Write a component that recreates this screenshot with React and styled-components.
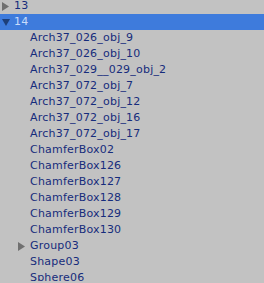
import React from 'react';
import styled, { createGlobalStyle } from 'styled-components';

const GlobalStyle = createGlobalStyle`
    html, body {
        margin: 0;
        padding: 0;
        background: #c2c2c2;
        overflow: hidden;
    }
`;

const Tree = styled.div`
    width: 264px;
    height: 283px;
    overflow: hidden;
    background: #c2c2c2;
    font-family: "DejaVu Sans", Verdana, sans-serif;
    font-size: 11px;
    letter-spacing: 0.2px;
    margin-top: -2px;
`;

const Row = styled.div`
    display: flex;
    align-items: center;
    height: 16px;
    padding-left: ${props => props.depth * 16 + 2}px;
    background: ${props => props.selected ? '#3e7bdc' : 'transparent'};
    color: ${props => props.selected ? '#c9dcfb' : '#162c7c'};
    white-space: nowrap;
`;

const Arrow = styled.span`
    width: 12px;
    height: 16px;
    display: flex;
    align-items: center;
    flex-shrink: 0;
`;

const Label = styled.span`
    line-height: 16px;
`;

const ArrowIcon = ({open, selected}) => (
    <svg width="8" height="9" viewBox="0 0 8 9">
        {open
            ? <polygon points="0,1 8,1 4,8" fill={selected ? '#1d3f7a' : '#707070'} />
            : <polygon points="0,0 7,4.5 0,9" fill="#707070" />}
    </svg>
);

const items = [
    {name: '13', depth: 0, arrow: 'closed'},
    {name: '14', depth: 0, arrow: 'open', selected: true},
    {name: 'Arch37_026_obj_9', depth: 1},
    {name: 'Arch37_026_obj_10', depth: 1},
    {name: 'Arch37_029__029_obj_2', depth: 1},
    {name: 'Arch37_072_obj_7', depth: 1},
    {name: 'Arch37_072_obj_12', depth: 1},
    {name: 'Arch37_072_obj_16', depth: 1},
    {name: 'Arch37_072_obj_17', depth: 1},
    {name: 'ChamferBox02', depth: 1},
    {name: 'ChamferBox126', depth: 1},
    {name: 'ChamferBox127', depth: 1},
    {name: 'ChamferBox128', depth: 1},
    {name: 'ChamferBox129', depth: 1},
    {name: 'ChamferBox130', depth: 1},
    {name: 'Group03', depth: 1, arrow: 'closed'},
    {name: 'Shape03', depth: 1},
    {name: 'Sphere06', depth: 1},
];

export default function App() {
    return (
        <>
            <GlobalStyle />
            <Tree>
                {items.map(item => (
                    <Row key={item.name} depth={item.depth} selected={item.selected}>
                        <Arrow>
                            {item.arrow && <ArrowIcon open={item.arrow === 'open'} selected={item.selected} />}
                        </Arrow>
                        <Label>{item.name}</Label>
                    </Row>
                ))}
            </Tree>
        </>
    );
}
